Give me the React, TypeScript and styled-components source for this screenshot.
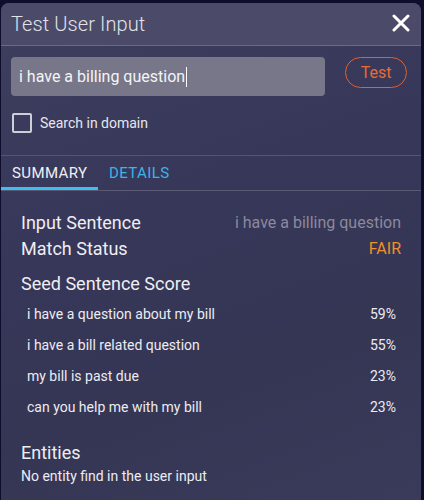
import React from "react";
import styled, { createGlobalStyle } from "styled-components";

const Global = createGlobalStyle`
  html, body { margin: 0; padding: 0; background: #0e0d2b; }
  body { font-family: Roboto, "Noto Sans", sans-serif; width: 424px; height: 500px; overflow: hidden; }
`;

const Panel = styled.div`
  margin: 3px 3px 0 1px;
  height: 497px;
  border-radius: 8px 8px 0 0;
  background: linear-gradient(160deg, #3e3e5e 0%, #37375a 40%, #353554 70%, #3a3a5a 100%);
  overflow: hidden;
  display: flex;
  flex-direction: column;
`;

const Header = styled.div`
  height: 42px;
  background: #4b4a69;
  border-bottom: 1px solid #6a6a85;
  display: flex;
  align-items: center;
  justify-content: space-between;
  padding: 0 10px 0 10px;
`;

const Title = styled.div`
  font-size: 20px;
  font-weight: 300;
  color: #e2e2ea;
  letter-spacing: 0.1px;
`;

const Close = styled.div`
  width: 20px;
  height: 20px;
  display: flex;
  align-items: center;
  justify-content: center;
  margin-top: -2px;
`;

const InputRow = styled.div`
  display: flex;
  align-items: flex-start;
  padding: 11px 0 0 10px;
  gap: 20px;
`;

const TextBox = styled.div`
  width: 306px;
  height: 39px;
  border-radius: 4px;
  background: #777789;
  display: flex;
  align-items: center;
  padding-left: 8px;
  font-size: 16px;
  color: #f4f4f6;
`;

const Caret = styled.span`
  display: inline-block;
  width: 1px;
  height: 20px;
  background: #fff;
  margin-left: 1px;
`;

const TestButton = styled.div`
  width: 60px;
  height: 29px;
  border: 1px solid #e2602a;
  border-radius: 16px;
  color: #ec6a2e;
  font-size: 16px;
  display: flex;
  align-items: center;
  justify-content: center;
`;

const CheckRow = styled.label`
  display: flex;
  align-items: center;
  gap: 8px;
  padding: 17px 0 0 11px;
  font-size: 14px;
  color: #e6e6ee;
`;

const Box = styled.span`
  width: 16px;
  height: 16px;
  border: 2px solid #cfcfd8;
  border-radius: 2px;
`;

const Tabs = styled.div`
  margin-top: 22px;
  border-top: 1px solid #55556f;
  border-bottom: 1px solid #5a5a75;
  display: flex;
  height: 34px;
`;

const Tab = styled.div<{ $active?: boolean }>`
  width: ${(p) => (p.$active ? "97px" : "auto")};
  padding-left: 11px;
  box-sizing: border-box;
  font-size: 15px;
  letter-spacing: 0.4px;
  color: ${(p) => (p.$active ? "#f0f0f4" : "#3bb4e8")};
  display: flex;
  align-items: center;
  padding-top: 3px;
  border-bottom: 3px solid ${(p) => (p.$active ? "#3dbdf0" : "transparent")};
`;

const Content = styled.div`
  padding: 18px 20px 0 20px;
  color: #eeeef2;
`;

const KV = styled.div`
  display: flex;
  justify-content: space-between;
  align-items: center;
  font-size: 18px;
  height: 26px;
`;

const Value = styled.span<{ $tone: "muted" | "fair" }>`
  font-size: 16px;
  color: ${(p) => (p.$tone === "muted" ? "#8a8a9c" : "#f0902a")};
`;

const SectionTitle = styled.div<{ $top: number }>`
  font-size: 18px;
  line-height: 21px;
  margin-top: ${(p) => p.$top}px;
`;

const ScoreList = styled.div`
  padding: 4px 5px 0 6px;
`;

const ScoreRow = styled.div`
  display: flex;
  justify-content: space-between;
  font-size: 14px;
  height: 31px;
  align-items: center;
  color: #ececf2;
`;

const Note = styled.div`
  font-size: 14px;
  line-height: 16px;
  margin-top: 5px;
  color: #ececf2;
`;

const scores = [
  ["i have a question about my bill", "59%"],
  ["i have a bill related question", "55%"],
  ["my bill is past due", "23%"],
  ["can you help me with my bill", "23%"],
];

export default function App() {
  return (
    <>
      <Global />
      <Panel>
        <Header>
          <Title>Test User Input</Title>
          <Close>
            <svg width="18" height="18" viewBox="0 0 18 18">
              <path d="M2 2 L16 16 M16 2 L2 16" stroke="#fff" strokeWidth="3" strokeLinecap="round" />
            </svg>
          </Close>
        </Header>
        <InputRow>
          <TextBox>
            i have a billing question
            <Caret />
          </TextBox>
          <TestButton>Test</TestButton>
        </InputRow>
        <CheckRow>
          <Box />
          Search in domain
        </CheckRow>
        <Tabs>
          <Tab $active>SUMMARY</Tab>
          <Tab>DETAILS</Tab>
        </Tabs>
        <Content>
          <KV>
            <span>Input Sentence</span>
            <Value $tone="muted">i have a billing question</Value>
          </KV>
          <KV>
            <span>Match Status</span>
            <Value $tone="fair">FAIR</Value>
          </KV>
          <SectionTitle $top={12}>Seed Sentence Score</SectionTitle>
          <ScoreList>
            {scores.map(([s, v]) => (
              <ScoreRow key={s}>
                <span>{s}</span>
                <span>{v}</span>
              </ScoreRow>
            ))}
          </ScoreList>
          <SectionTitle $top={20}>Entities</SectionTitle>
          <Note>No entity find in the user input</Note>
        </Content>
      </Panel>
    </>
  );
}
